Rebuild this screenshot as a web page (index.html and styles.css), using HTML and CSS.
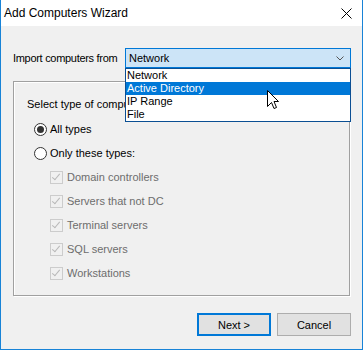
FILE: index.html
```html
<!DOCTYPE html>
<html>

<head>
	<title>Add Computers Wizard</title>
	<meta charset='utf-8' />
	<link rel="stylesheet" href="styles.css">
</head>

<body>
	<div class="window">
		<div class="titlebar">
			<span class="title">Add Computers Wizard</span>
			<svg class="close" width="11" height="11" viewBox="0 0 11 11">
				<path d="M0.5 0.5 L10.5 10.5 M10.5 0.5 L0.5 10.5" stroke="#000" stroke-width="1" fill="none" />
			</svg>
		</div>

		<div class="content">
			<div class="importRow">
				<span class="label">Import computers from</span>
				<div class="combo">
					<span class="comboText">Network</span>
					<svg class="chevron" width="8" height="5" viewBox="0 0 8 5">
						<path d="M0.5 0.5 L4 4 L7.5 0.5" stroke="#555" stroke-width="1" fill="none" />
					</svg>
					<!-- opened list lies over the group box -->
					<ul class="dropList">
						<li>Network</li>
						<li class="selected">Active Directory</li>
						<li>IP Range</li>
						<li>File</li>
					</ul>
				</div>
			</div>

			<div class="group">
				<p class="groupTitle">Select type of computers:</p>
				<div class="row">
					<span class="radio checked"></span>
					<span>All types</span>
				</div>
				<div class="row">
					<span class="radio"></span>
					<span>Only these types:</span>
				</div>
				<div class="row sub disabled">
					<span class="check"></span>
					<span>Domain controllers</span>
				</div>
				<div class="row sub disabled">
					<span class="check"></span>
					<span>Servers that not DC</span>
				</div>
				<div class="row sub disabled">
					<span class="check"></span>
					<span>Terminal servers</span>
				</div>
				<div class="row sub disabled">
					<span class="check"></span>
					<span>SQL servers</span>
				</div>
				<div class="row sub disabled">
					<span class="check"></span>
					<span>Workstations</span>
				</div>
			</div>

			<div class="buttons">
				<button class="btn default">Next &gt;</button>
				<button class="btn">Cancel</button>
			</div>
		</div>

		<svg class="cursor" width="13" height="20" viewBox="0 0 13 20">
			<path d="M0.5 0.5 L0.5 16.5 L4.5 12.5 L7 18.5 L9.5 17.5 L7 11.5 L11.5 11.5 Z" fill="#fff" stroke="#000" stroke-width="1" stroke-linejoin="miter" />
		</svg>
	</div>
</body>

</html>
```

FILE: styles.css
```css
body {
	margin: 0;
	font-family: "Liberation Sans", Arial, sans-serif;
	font-size: 11px;
	color: #000;
}

ul,
li,
p {
	list-style: none;
	margin: 0;
	padding: 0;
}

.window {
	position: relative;
	width: 363px;
	height: 350px;
	box-sizing: border-box;
	border: 1px solid #1883d7;
	border-top: none;
	display: flex;
	flex-direction: column;
	background: #f0f0f0;
}

.titlebar {
	height: 26px;
	background: #fff;
	display: flex;
	align-items: center;
	justify-content: space-between;
	padding: 0 10px 0 3px;
	flex-shrink: 0;
}

.titlebar .title {
	font-size: 12px;
	line-height: 26px;
}

.close {
	display: block;
	margin-top: 1px;
}

.content {
	flex: 1;
	display: flex;
	flex-direction: column;
	padding: 22px 11px 0 12px;
}

.importRow {
	display: flex;
	align-items: center;
	justify-content: space-between;
	height: 20px;
}

.importRow .label {
	letter-spacing: -0.3px;
}

.combo {
	position: relative;
	width: 226px;
	height: 20px;
	box-sizing: border-box;
	border: 1px solid #0078d7;
	background: #cce4f7;
	display: flex;
	align-items: center;
	justify-content: space-between;
	padding: 0 6px 0 3px;
}

.chevron {
	display: block;
}

.dropList {
	position: absolute;
	top: 19px;
	left: -1px;
	width: 226px;
	box-sizing: border-box;
	border: 1px solid #0b4f93;
	background: #fff;
	z-index: 2;
}

.dropList li {
	height: 13px;
	line-height: 13px;
	padding-left: 1px;
}

.dropList li.selected {
	background: #0078d7;
	color: #fff;
}

.group {
	margin: 13px 1px 0 0;
	height: 215px;
	box-sizing: border-box;
	border: 1px solid #a0a0a0;
	box-shadow: inset 1px 1px 0 #fff, 1px 1px 0 #fff;
	padding: 14px 0 0 20px;
}

.groupTitle {
	line-height: 16px;
	margin: 0 0 5px -7px;
}

.row {
	display: flex;
	align-items: center;
	height: 24px;
}

.row.sub {
	padding-left: 16px;
}

.row.disabled {
	color: #6d6d6d;
}

.radio {
	width: 13px;
	height: 13px;
	box-sizing: border-box;
	border: 1px solid #333;
	border-radius: 50%;
	background: #fff;
	margin-right: 3px;
	display: flex;
	align-items: center;
	justify-content: center;
}

.radio.checked::after {
	content: "";
	width: 7px;
	height: 7px;
	border-radius: 50%;
	background: #333;
}

.check {
	position: relative;
	width: 13px;
	height: 13px;
	box-sizing: border-box;
	border: 1px solid #cccccc;
	background: #f0f0f0;
	margin-right: 4px;
}

.check::after {
	content: "";
	position: absolute;
	left: 3px;
	top: 0px;
	width: 3px;
	height: 7px;
	border-right: 1px solid #b8b8b8;
	border-bottom: 1px solid #b8b8b8;
	transform: rotate(40deg);
}

.buttons {
	display: flex;
	justify-content: flex-end;
	gap: 6px;
	margin-top: 17px;
}

.btn {
	width: 74px;
	height: 23px;
	box-sizing: border-box;
	border: 1px solid #adadad;
	background: #e1e1e1;
	font-family: "Liberation Sans", Arial, sans-serif;
	font-size: 11px;
	color: #000;
	padding: 0;
}

.btn.default {
	border: 2px solid #0078d7;
}

.cursor {
	position: absolute;
	left: 266px;
	top: 90px;
	z-index: 3;
}
```
